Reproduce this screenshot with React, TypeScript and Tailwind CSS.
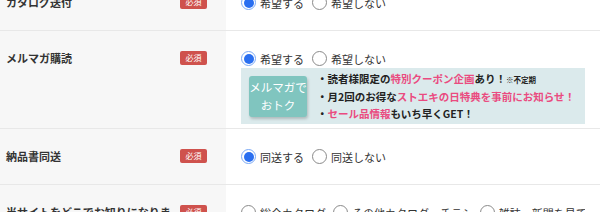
import React from 'react';

const font = { fontFamily: '"Noto Sans CJK JP", "Noto Sans", sans-serif' };

function Radio({ label, checked }: { label: string; checked?: boolean }) {
  return (
    <label className="flex items-center gap-[4px] shrink-0 whitespace-nowrap text-[11px] leading-[14px] text-[#333]">
      {checked ? (
        <span className="w-[15px] h-[15px] rounded-full border border-[#7aa9f5] bg-white flex items-center justify-center">
          <span className="w-[10px] h-[10px] rounded-full bg-[#2a6ff0]" />
        </span>
      ) : (
        <span className="w-[15px] h-[15px] rounded-full border border-[#8a8a8a] bg-white" />
      )}
      <span>{label}</span>
    </label>
  );
}

function Badge() {
  return (
    <span className="shrink-0 w-[27px] h-[14px] rounded-[2px] bg-[#cf524d] text-white text-[8px] leading-[14px] text-center">
      必須
    </span>
  );
}

function Row({
  label,
  children,
  className = '',
  rightClass = 'py-[20px]',
}: {
  label: string;
  children: React.ReactNode;
  className?: string;
  rightClass?: string;
}) {
  return (
    <div className={`flex border-b border-[#e8e8e8] ${className}`}>
      <div className="w-[226px] shrink-0 bg-[#f7f7f7] pl-[6px] pr-[19px] py-[20px] flex items-start justify-between">
        <span className="w-[165px] text-[11px] leading-[14px] font-bold text-[#333]">{label}</span>
        <Badge />
      </div>
      <div className={`flex-1 pl-[15px] pr-[15px] bg-white min-w-0 ${rightClass}`}>{children}</div>
    </div>
  );
}

export default function App() {
  return (
    <div className="w-[600px] h-[212px] overflow-hidden bg-white" style={font}>
      <Row label="カタログ送付" className="-mt-[25px]">
        <div className="flex gap-[8px]">
          <Radio label="希望する" checked />
          <Radio label="希望しない" />
        </div>
      </Row>
      <Row label="メルマガ購読" rightClass="pt-[20px] pb-[4px]">
        <div className="flex gap-[8px]">
          <Radio label="希望する" checked />
          <Radio label="希望しない" />
        </div>
        <div className="mt-[2px] h-[56px] bg-[#dbeaec] flex items-center pl-[8px]">
          <div className="w-[58px] h-[41px] rounded-[3px] bg-[#80c5bf] shadow-[1px_2px_3px_rgba(0,0,0,0.2)] flex flex-col items-center justify-center text-white text-[11.5px] leading-[18px]">
            <span>メルマガで</span>
            <span>おトク</span>
          </div>
          <div className="ml-[10px] text-[10.5px] leading-[17px] font-bold text-[#222] whitespace-nowrap">
            <p>
              ・読者様限定の<span className="text-[#ea4b80]">特別クーポン企画</span>あり！
              <span className="text-[7.5px]">※不定期</span>
            </p>
            <p>
              ・月2回のお得な<span className="text-[#ea4b80]">ストエキの日特典を事前にお知らせ！</span>
            </p>
            <p>
              ・<span className="text-[#ea4b80]">セール品情報</span>もいち早くGET！
            </p>
          </div>
        </div>
      </Row>
      <Row label="納品書同送">
        <div className="flex gap-[8px]">
          <Radio label="同送する" checked />
          <Radio label="同送しない" />
        </div>
      </Row>
      <Row label="当サイトをどこでお知りになりましたか？">
        <div className="flex gap-[7px] overflow-hidden">
          <Radio label="総合カタログ" />
          <Radio label="その他カタログ・チラシ" />
          <Radio label="雑誌・新聞を見て" />
          <Radio label="インターネット検索" />
        </div>
      </Row>
    </div>
  );
}
